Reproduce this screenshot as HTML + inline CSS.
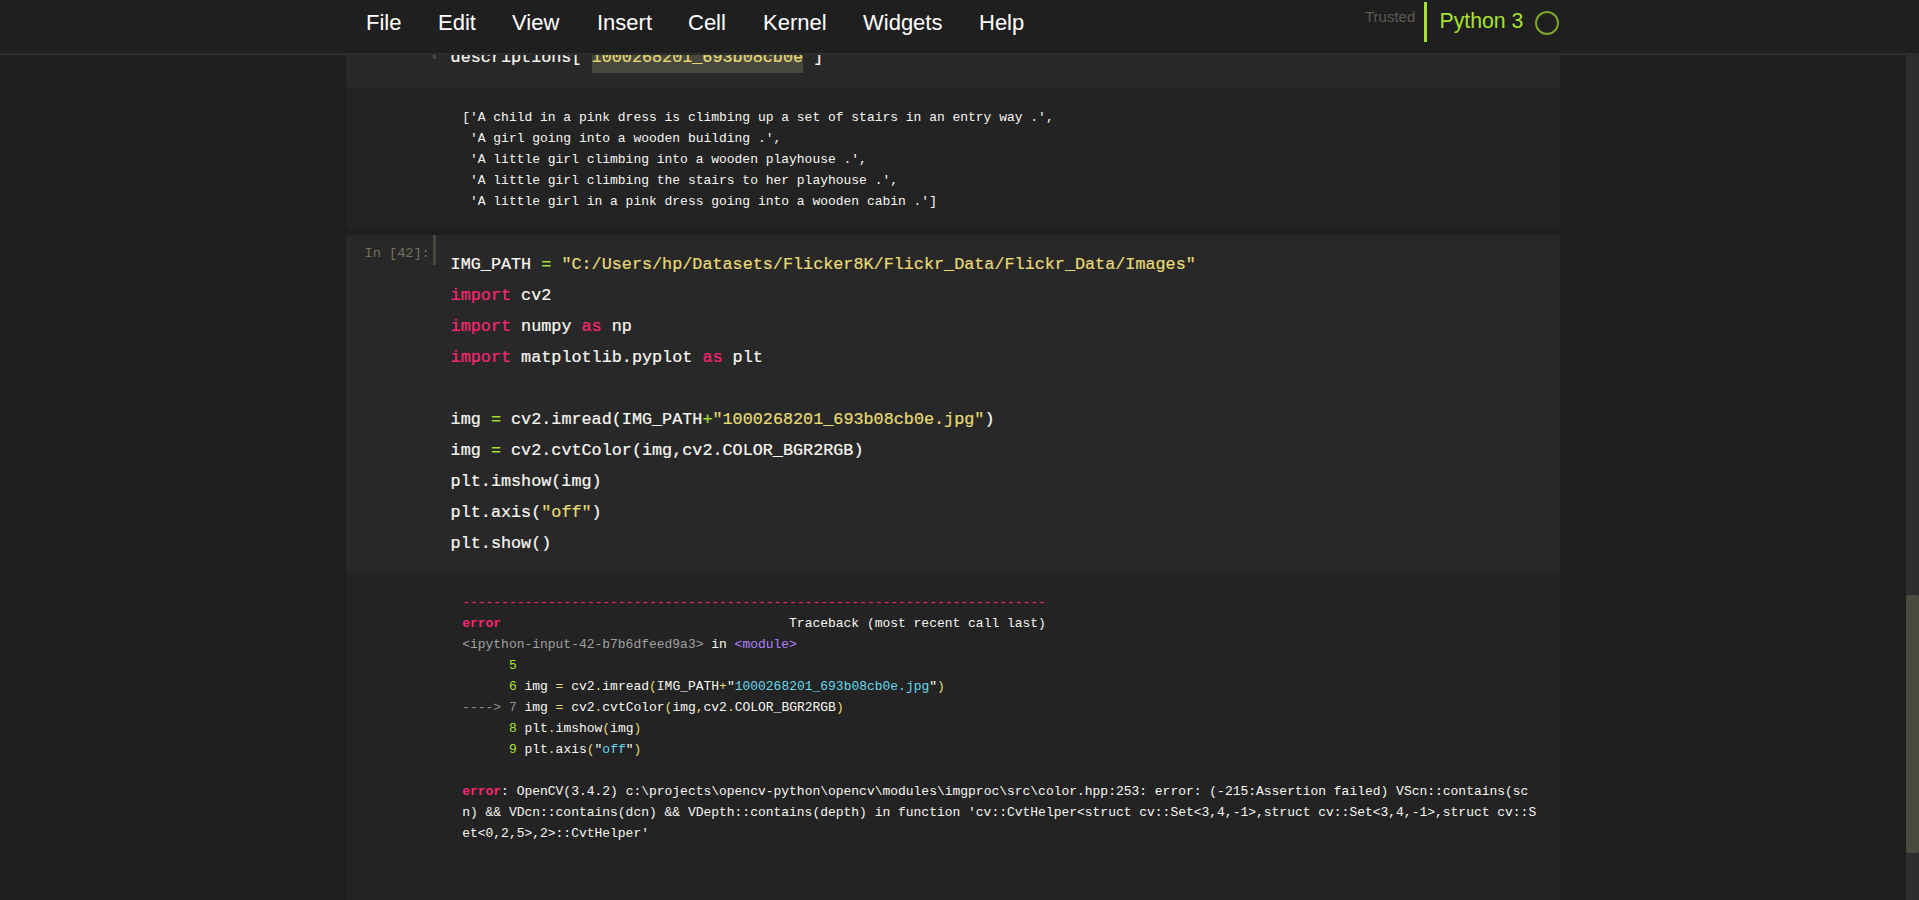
<!DOCTYPE html>
<html><head><meta charset="utf-8">
<style>
html,body{margin:0;padding:0}
body{width:1919px;height:900px;overflow:hidden;background:#1e1e1e;position:relative;font-family:"Liberation Sans",sans-serif}
#hdr{position:absolute;left:0;top:0;width:1919px;height:53px;background:#1f1f1f;z-index:5}
#hdrline{position:absolute;left:0;top:53px;width:1919px;height:2px;background:#2d2d2b;z-index:5}
.mi{position:absolute;top:10px;font-size:22px;color:#ffffff;line-height:26px;white-space:pre}
#trusted{position:absolute;left:1365px;top:7.6px;font-size:15px;color:#5d5a4f;line-height:18px}
#kbar{position:absolute;left:1424px;top:2px;width:3px;height:40px;background:#a6e22e}
#kname{position:absolute;left:1439.5px;top:8.6px;font-size:21.25px;color:#a6e22e;line-height:24px}
#kcirc{position:absolute;left:1534.8px;top:11px;width:20px;height:20px;border:2px solid #7da52b;border-radius:50%}
#sbtrack{position:absolute;left:1906px;top:54px;width:13px;height:846px;background:#2e2e2e}
#sbthumb{position:absolute;left:1906px;top:595px;width:13px;height:258px;background:#4b4a40;border-radius:2px}
.mono{font-family:"Liberation Mono",monospace;white-space:pre}
.inbg{position:absolute;left:346px;width:1214px;background:#282828}
.outbg{position:absolute;left:346px;width:1214px;background:#232323}
.code{position:absolute;left:450.6px;font-size:16.8px;line-height:31px;color:#f8f8f2;-webkit-text-stroke:0.2px currentColor}
.out{position:absolute;left:462.2px;font-size:12.975px;line-height:21px;color:#f8f8f2}
.k{color:#f92672}.s{color:#e6db74}.o{color:#a6e22e}
.prompt{position:absolute;font-size:13px;color:#75715e;line-height:16px}
.pbar{position:absolute;left:433px;width:3px;background:#49483e}
.sel{background:#49483e}
.tr{color:#f92672}.b{font-weight:bold}.tg{color:#a0a0a0}.tgd{color:#8f8f8f}.tn{color:#a6e22e}.ty{color:#e6db74}.tc{color:#66d9ef}.tp{color:#ae81ff}
</style></head><body>
<div id="hdr">
  <div class="mi" style="left:366px">File</div>
  <div class="mi" style="left:438px">Edit</div>
  <div class="mi" style="left:512px">View</div>
  <div class="mi" style="left:597px">Insert</div>
  <div class="mi" style="left:688px">Cell</div>
  <div class="mi" style="left:763px">Kernel</div>
  <div class="mi" style="left:863px">Widgets</div>
  <div class="mi" style="left:979px">Help</div>
  <div id="trusted">Trusted</div>
  <div id="kbar"></div>
  <div id="kname">Python 3</div>
  <div id="kcirc"></div>
</div>
<div id="hdrline"></div>

<!-- cell 1 -->
<div class="inbg" style="top:54px;height:33px"></div>
<div class="pbar" style="top:54px;height:5px"></div>
<div style="position:absolute;left:592px;top:42px;width:211px;height:31px;background:#49483e"></div>
<div class="code mono" style="top:42px">descriptions[<span class="s"><span style="position:relative;top:-2px">'</span>1000268201_693b08cb0e<span style="position:relative;top:-2px">'</span></span>]</div>
<div class="outbg" style="top:87px;height:142px"></div>
<div class="out mono" style="top:107px">['A child in a pink dress is climbing up a set of stairs in an entry way .',
 'A girl going into a wooden building .',
 'A little girl climbing into a wooden playhouse .',
 'A little girl climbing the stairs to her playhouse .',
 'A little girl in a pink dress going into a wooden cabin .']</div>

<!-- cell 2 -->
<div class="inbg" style="top:235px;height:338px;border-radius:2px 2px 0 0"></div>
<div class="prompt mono" style="left:364.5px;top:246px;font-size:13.6px">In [42]:</div>
<div class="pbar" style="top:235px;height:30px"></div>
<div class="code mono" style="top:249px">IMG_PATH <span class="o">=</span> <span class="s">"C:/Users/hp/Datasets/Flicker8K/Flickr_Data/Flickr_Data/Images"</span>
<span class="k">import</span> cv2
<span class="k">import</span> numpy <span class="k">as</span> np
<span class="k">import</span> matplotlib.pyplot <span class="k">as</span> plt

img <span class="o">=</span> cv2.imread(IMG_PATH<span class="o">+</span><span class="s">"1000268201_693b08cb0e.jpg"</span>)
img <span class="o">=</span> cv2.cvtColor(img,cv2.COLOR_BGR2RGB)
plt.imshow(img)
plt.axis(<span class="s">"off"</span>)
plt.show()</div>
<div class="outbg" style="top:573px;height:327px"></div>
<div class="out mono" style="top:592px"><span class="tr">---------------------------------------------------------------------------</span>
<span class="tr b">error</span>                                     Traceback (most recent call last)
<span class="tg">&lt;ipython-input-42-b7b6dfeed9a3&gt;</span> in <span class="tp">&lt;module&gt;</span>
<span class="tn">      5</span> 
<span class="tn">      6</span> img <span class="ty">=</span> cv2<span class="ty">.</span>imread<span class="ty">(</span>IMG_PATH<span class="ty">+</span>"<span class="tc">1000268201_693b08cb0e.jpg</span>"<span class="ty">)</span>
<span class="tgd">----&gt; 7</span> img <span class="ty">=</span> cv2<span class="ty">.</span>cvtColor<span class="ty">(</span>img<span class="ty">,</span>cv2<span class="ty">.</span>COLOR_BGR2RGB<span class="ty">)</span>
<span class="tn">      8</span> plt<span class="ty">.</span>imshow<span class="ty">(</span>img<span class="ty">)</span>
<span class="tn">      9</span> plt<span class="ty">.</span>axis<span class="ty">(</span>"<span class="tc">off</span>"<span class="ty">)</span>

<span class="tr b">error</span>: OpenCV(3.4.2) c:\projects\opencv-python\opencv\modules\imgproc\src\color.hpp:253: error: (-215:Assertion failed) VScn::contains(sc
n) &amp;&amp; VDcn::contains(dcn) &amp;&amp; VDepth::contains(depth) in function 'cv::CvtHelper&lt;struct cv::Set&lt;3,4,-1&gt;,struct cv::Set&lt;3,4,-1&gt;,struct cv::S
et&lt;0,2,5&gt;,2&gt;::CvtHelper'</div>

<div id="sbtrack"></div>
<div id="sbthumb"></div>
</body></html>
